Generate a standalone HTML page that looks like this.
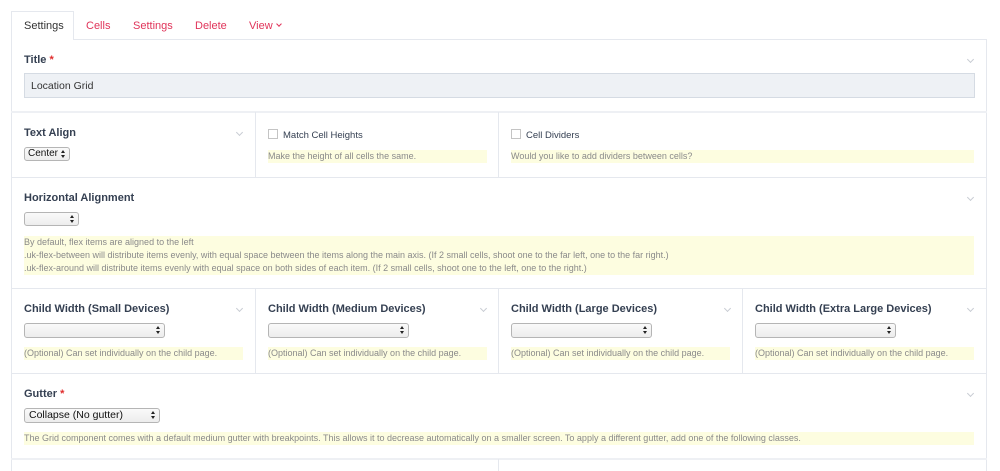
<!DOCTYPE html>
<html><head><meta charset="utf-8"><style>
*{box-sizing:border-box;margin:0;padding:0}
body{width:1000px;height:471px;background:#fff;font-family:"Liberation Sans",sans-serif;position:relative;overflow:hidden;color:#354052}
.a{position:absolute}
.h{position:absolute;height:1px;background:#e5e8ee}
.v{position:absolute;width:1px;background:#e5e8ee}
.lab{position:absolute;font-size:11px;font-weight:bold;color:#354052;line-height:13px}
.lab b{color:#e02c2c}
.chev{position:absolute;width:5px;height:5px;border-right:1px solid #c8ccd3;border-bottom:1px solid #c8ccd3;transform:rotate(45deg)}
.note{position:absolute;background:#fdfde0;font-size:9px;color:#8a8a8a;line-height:13px;padding-left:0}
.sel{position:absolute;border:1px solid #b5b5b5;border-radius:3px;background:linear-gradient(#fafafa,#ededed);font-size:10.5px;color:#111;line-height:12px;padding-left:4px}
.sel:after{content:"";position:absolute;right:4px;top:2px;width:0;height:0;border-left:2.5px solid transparent;border-right:2.5px solid transparent;border-bottom:3px solid #222}
.sel:before{content:"";position:absolute;right:4px;top:7px;width:0;height:0;border-left:2.5px solid transparent;border-right:2.5px solid transparent;border-top:3px solid #222}
.cb{position:absolute;width:10px;height:10px;border:1px solid #c4c4c4;background:#fff}
.t{position:absolute;font-size:11px;line-height:13px}
.red{color:#e0345a}
</style></head><body>
<div class="a" style="left:11px;top:11px;width:63px;height:29px;border:1px solid #e5e8ee;border-bottom:none;background:#fff;z-index:2"></div>
<div class="t" style="left:24px;top:20px;color:#333;z-index:3">Settings</div>
<div class="t red" style="left:86px;top:20px">Cells</div>
<div class="t red" style="left:133px;top:20px">Settings</div>
<div class="t red" style="left:195px;top:20px">Delete</div>
<div class="t red" style="left:249px;top:20px">View</div>
<div class="chev" style="left:277px;top:22px;border-color:#e0345a;width:4px;height:4px"></div>
<div class="h" style="left:11px;top:39px;width:976px"></div>
<div class="v" style="left:11px;top:39px;height:432px"></div>
<div class="v" style="left:986px;top:39px;height:432px"></div>
<div class="h" style="left:11px;top:111px;width:976px;height:2px;background:#eef0f4"></div>
<div class="h" style="left:11px;top:177px;width:976px"></div>
<div class="h" style="left:11px;top:288px;width:976px"></div>
<div class="h" style="left:11px;top:373px;width:976px"></div>
<div class="h" style="left:11px;top:458px;width:976px;height:2px;background:#eef0f4"></div>
<div class="v" style="left:255px;top:112px;height:65px"></div>
<div class="v" style="left:498px;top:112px;height:65px"></div>
<div class="v" style="left:255px;top:288px;height:85px"></div>
<div class="v" style="left:498px;top:288px;height:85px"></div>
<div class="v" style="left:742px;top:288px;height:85px"></div>
<div class="v" style="left:498px;top:459px;height:12px"></div>
<div class="lab" style="left:24px;top:54px">Title <b>*</b></div>
<div class="chev" style="left:968px;top:57px"></div>
<div class="a" style="left:24px;top:73px;width:951px;height:25px;background:#eef1f5;border:1px solid #d5dbe3"></div>
<div class="t" style="left:31px;top:80px;font-size:10.5px;color:#333">Location Grid</div>
<div class="lab" style="left:24px;top:127px">Text Align</div>
<div class="chev" style="left:237px;top:130px"></div>
<div class="sel" style="left:24px;top:147px;width:46px;height:14px;padding-left:3px;font-size:10px">Center</div>
<div class="cb" style="left:268px;top:129px"></div>
<div class="t" style="left:283px;top:129px;font-size:9.5px">Match Cell Heights</div>
<div class="note" style="left:268px;top:150px;width:219px;height:13px">Make the height of all cells the same.</div>
<div class="cb" style="left:511px;top:129px"></div>
<div class="t" style="left:526px;top:129px;font-size:9.5px">Cell Dividers</div>
<div class="note" style="left:511px;top:150px;width:463px;height:13px">Would you like to add dividers between cells?</div>
<div class="lab" style="left:24px;top:192px">Horizontal Alignment</div>
<div class="chev" style="left:968px;top:195px"></div>
<div class="sel" style="left:24px;top:212px;width:55px;height:14px"></div>
<div class="note" style="left:24px;top:236px;width:950px;height:39px">By default, flex items are aligned to the left<br>.uk-flex-between will distribute items evenly, with equal space between the items along the main axis. (If 2 small cells, shoot one to the far left, one to the far right.)<br>.uk-flex-around will distribute items evenly with equal space on both sides of each item. (If 2 small cells, shoot one to the left, one to the right.)</div>
<div class="lab" style="left:24px;top:303px">Child Width (Small Devices)</div>
<div class="chev" style="left:237px;top:306px"></div>
<div class="sel" style="left:24px;top:323px;width:141px;height:15px"></div>
<div class="note" style="left:24px;top:347px;width:219px;height:13px">(Optional) Can set individually on the child page.</div>
<div class="lab" style="left:268px;top:303px">Child Width (Medium Devices)</div>
<div class="chev" style="left:481px;top:306px"></div>
<div class="sel" style="left:268px;top:323px;width:141px;height:15px"></div>
<div class="note" style="left:268px;top:347px;width:219px;height:13px">(Optional) Can set individually on the child page.</div>
<div class="lab" style="left:511px;top:303px">Child Width (Large Devices)</div>
<div class="chev" style="left:725px;top:306px"></div>
<div class="sel" style="left:511px;top:323px;width:141px;height:15px"></div>
<div class="note" style="left:511px;top:347px;width:219px;height:13px">(Optional) Can set individually on the child page.</div>
<div class="lab" style="left:755px;top:303px">Child Width (Extra Large Devices)</div>
<div class="chev" style="left:968px;top:306px"></div>
<div class="sel" style="left:755px;top:323px;width:141px;height:15px"></div>
<div class="note" style="left:755px;top:347px;width:219px;height:13px">(Optional) Can set individually on the child page.</div>
<div class="lab" style="left:24px;top:388px">Gutter <b>*</b></div>
<div class="chev" style="left:968px;top:391px"></div>
<div class="sel" style="left:24px;top:408px;width:136px;height:15px">Collapse (No gutter)</div>
<div class="note" style="left:24px;top:432px;width:950px;height:13px">The Grid component comes with a default medium gutter with breakpoints. This allows it to decrease automatically on a smaller screen. To apply a different gutter, add one of the following classes.</div>
</body></html>
